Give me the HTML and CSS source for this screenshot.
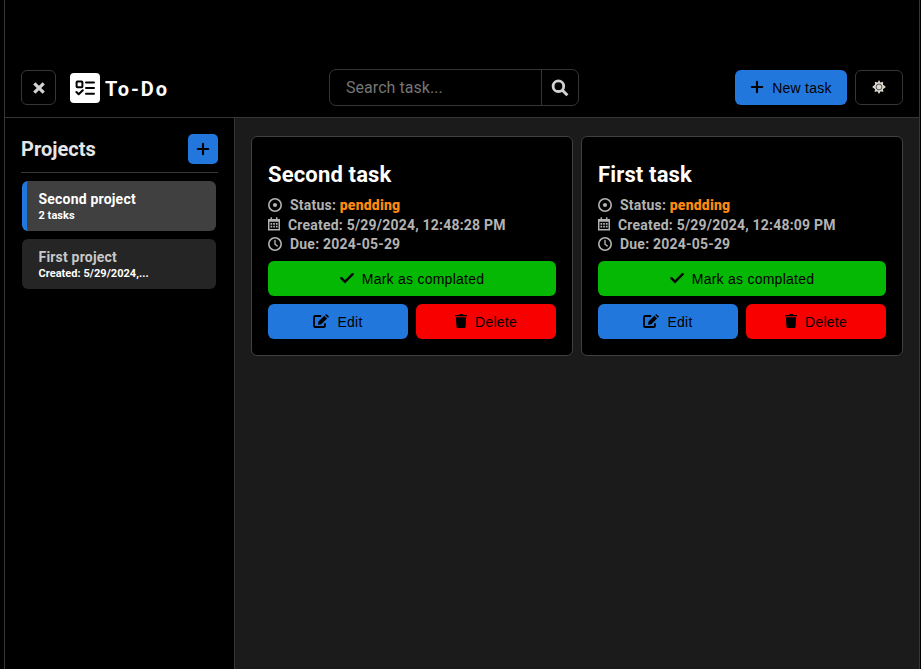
FILE: index.html
```html
<!DOCTYPE html>
<html lang="en">
<head>
<meta charset="utf-8">
<title>To-Do</title>
<link rel="stylesheet" href="styles.css">
</head>
<body>
<svg class="sprite" aria-hidden="true">
  <symbol id="plus" viewBox="0 0 14 14"><path d="M7 1.8v10.4M1.8 7h10.4" fill="none" stroke="currentColor" stroke-width="2.1" stroke-linecap="round"/></symbol>
  <symbol id="dot" viewBox="0 0 14 14"><circle cx="7" cy="7" r="6.2" fill="none" stroke="currentColor" stroke-width="1.6"/><circle cx="7" cy="7" r="2.1" fill="currentColor"/></symbol>
  <symbol id="calendar" viewBox="0 0 12 14"><path d="M.7 2.7h10.6v10.1H.7zM.7 4h10.6M3.3.3v3M8.7.3v3" fill="none" stroke="currentColor" stroke-width="1.5"/><path d="M2.5 6h1.7v1.7H2.5zM5.2 6h1.7v1.7H5.2zM7.9 6h1.7v1.7H7.9zM2.5 8.8h1.7v1.7H2.5zM5.2 8.8h1.7v1.7H5.2zM7.9 8.8h1.7v1.7H7.9z" fill="currentColor"/></symbol>
  <symbol id="clock" viewBox="0 0 14 14"><circle cx="7" cy="7" r="6.2" fill="none" stroke="currentColor" stroke-width="1.6"/><path d="M7 3.4V7.2L9.2 8.9" fill="none" stroke="currentColor" stroke-width="1.4" stroke-linecap="round"/></symbol>
  <symbol id="check" viewBox="0 0 14 14"><path d="M1.4 7.2 5 10.8l7.6-7.6" fill="none" stroke="currentColor" stroke-width="2.4" stroke-linecap="round"/></symbol>
  <symbol id="edit" viewBox="0 0 16 14"><path d="M8.2 2H2.3Q1 2 1 3.3v8.4Q1 13 2.3 13h8.4q1.3 0 1.3-1.3V9.3" fill="none" stroke="currentColor" stroke-width="1.8"/><path d="M11.3 1.8 14.1 4.6 8.2 10.3 5 10.8 5.5 7.6zM12.1 1l.7-.6q.5-.5 1 0l1.8 1.8q.5.5 0 1l-.7.6z" fill="currentColor"/></symbol>
  <symbol id="trash" viewBox="0 0 12 14"><path d="M.4.9h3.3L4.3 0h3.4l.6.9h3.3q.4 0 .4.4v1H0v-1q0-.4.4-.4zM.9 3.2h10.2l-.5 9.5Q10.5 14 9.3 14H2.7q-1.2 0-1.3-1.3z" fill="currentColor"/></symbol>
</svg>
<div class="app">
  <header class="header">
    <div class="brand">
      <button class="icon-btn close"><svg width="14" height="14" viewBox="0 0 14 14"><path d="M2.3 2.3l9.4 9.4M11.7 2.3l-9.4 9.4" fill="none" stroke="currentColor" stroke-width="3.2"/></svg></button>
      <svg class="logo" width="30" height="30" viewBox="0 0 30 30"><rect width="30" height="30" rx="4" fill="#fff"/><g fill="none" stroke="#000" stroke-width="2" stroke-linejoin="round" stroke-linecap="round"><rect x="6.6" y="8.4" width="5.8" height="5.8" rx=".8"/><path d="M6.4 19l2.3 2.3L12.8 17.2M16 9.4h8M16 15h8M16 20.8h8"/></g></svg>
      <span class="brand-name">To-Do</span>
    </div>
    <div class="search">
      <span class="search-input">Search task...</span>
      <button class="search-btn"><svg width="18" height="18" viewBox="0 0 18 18"><circle cx="7.4" cy="7.2" r="5.3" fill="none" stroke="currentColor" stroke-width="2.8"/><path d="M11.4 11.2l5 5" stroke="currentColor" stroke-width="3"/></svg></button>
    </div>
    <div class="actions">
      <button class="btn new"><svg width="14" height="14"><use href="#plus"/></svg><span>New task</span></button>
      <button class="icon-btn theme"><svg width="14" height="14" viewBox="0 0 14 14"><path d="M7 0l1.3 2.6 2.9-.9-.3 2.8L13.9 7l-3 2.2.5 2.7-2.8-.6L7 14l-1.6-2.7-2.8.6.5-2.7L.1 7l3-2.5-.3-2.8 2.9.9z" fill="currentColor"/><circle cx="7" cy="7" r="4.2" fill="currentColor"/><circle cx="7" cy="7" r="2.9" fill="none" stroke="#333" stroke-width=".8"/></svg></button>
    </div>
  </header>
  <div class="body">
    <aside class="sidebar">
      <div class="sidebar-head"><h2>Projects</h2><button class="add"><svg width="14" height="14"><use href="#plus"/></svg></button></div>
      <div class="project active"><div class="project-name">Second project</div><div class="project-meta">2 tasks</div></div>
      <div class="project"><div class="project-name">First project</div><div class="project-meta">Created: 5/29/2024,...</div></div>
    </aside>
    <main class="tasks">
      <article class="card">
        <h3>Second task</h3>
        <div class="info status"><svg width="14" height="14"><use href="#dot"/></svg><span>Status: <b>pendding</b></span></div>
        <div class="info created"><svg width="12" height="14"><use href="#calendar"/></svg><span>Created: 5/29/2024, 12:48:28 PM</span></div>
        <div class="info due"><svg width="14" height="14"><use href="#clock"/></svg><span>Due: 2024-05-29</span></div>
        <div class="buttons">
          <button class="btn done"><svg width="14" height="14"><use href="#check"/></svg><span>Mark as complated</span></button>
          <button class="btn edit"><svg width="16" height="14"><use href="#edit"/></svg><span>Edit</span></button>
          <button class="btn delete"><svg width="12" height="14"><use href="#trash"/></svg><span>Delete</span></button>
        </div>
      </article>
      <article class="card">
        <h3>First task</h3>
        <div class="info status"><svg width="14" height="14"><use href="#dot"/></svg><span>Status: <b>pendding</b></span></div>
        <div class="info created"><svg width="12" height="14"><use href="#calendar"/></svg><span>Created: 5/29/2024, 12:48:09 PM</span></div>
        <div class="info due"><svg width="14" height="14"><use href="#clock"/></svg><span>Due: 2024-05-29</span></div>
        <div class="buttons">
          <button class="btn done"><svg width="14" height="14"><use href="#check"/></svg><span>Mark as complated</span></button>
          <button class="btn edit"><svg width="16" height="14"><use href="#edit"/></svg><span>Edit</span></button>
          <button class="btn delete"><svg width="12" height="14"><use href="#trash"/></svg><span>Delete</span></button>
        </div>
      </article>
    </main>
  </div>
</div>
</body>
</html>
```
FILE: styles.css
```css
* { box-sizing: border-box; }
body { margin: 0; background: #000; font-family: Roboto, "Liberation Sans", sans-serif; color: #fff; overflow: hidden; }
h2, h3 { margin: 0; }
button { margin: 0; padding: 0; border: 0; font: inherit; display: flex; align-items: center; justify-content: center; }
svg { display: block; flex: none; }
.sprite { display: none; }

.app { height: 669px; margin: 0 1px 0 4px; border: solid #363636; border-width: 0 1px; display: flex; flex-direction: column; }
.header { height: 118px; padding: 58px 16px 0; border-bottom: 1px solid #363636; display: grid; grid-template-columns: 308px 250px 1fr; align-items: center; flex: none; }
.brand { display: flex; align-items: center; }
.icon-btn { height: 35px; border: 1px solid #363636; border-radius: 6px; background: #000; color: #d2d2d2; }
.close { width: 35px; }
.logo { margin-left: 14px; }
.brand-name { margin: 2px 0 0 5px; font-size: 20px; line-height: 24px; font-weight: 700; letter-spacing: 2px; }
.search { height: 37px; display: flex; border: 1px solid #363636; border-radius: 7px; }
.search-input { flex: 1; padding-left: 16px; font-size: 16px; line-height: 35px; color: #757575; letter-spacing: .05px; }
.search-btn { width: 37px; border-left: 1px solid #363636; background: transparent; color: #d2d2d2; }
.actions { display: flex; justify-content: flex-end; gap: 8px; }
.theme { width: 48px; color: #ddd8d0; }
.theme svg { margin-bottom: 1px; }

.btn { height: 35px; border-radius: 6px; gap: 8px; font-family: "Liberation Sans", Arial, sans-serif; font-size: 14px; color: #000; letter-spacing: .25px; }
.btn svg { margin-bottom: 2px; }
.new { width: 112px; background: #2277dd; }

.body { display: flex; flex: 1; }
.sidebar { width: 230px; padding: 16px 16px 0; border-right: 1px solid #363636; }
.sidebar-head { height: 39px; margin-bottom: 8px; border-bottom: 1px solid #363636; display: flex; justify-content: space-between; }
.sidebar-head h2 { font-size: 20px; line-height: 30px; color: #e6e6e6; }
.add { width: 30px; height: 30px; border-radius: 5px; background: #2277dd; color: #000; }
.add svg { margin-bottom: 1px; }
.project { width: 194px; height: 50px; margin: 0 0 8px 1px; padding: 9px 0 0 11.5px; border-left: 5px solid #252525; border-radius: 6px; background: #252525; }
.project.active { border-left-color: #2277dd; background: #404040; }
.project-name { font-size: 14px; line-height: 18px; font-weight: 700; color: #c8c8c8; letter-spacing: .2px; }
.active .project-name { color: #fff; }
.project-meta { font-size: 11px; line-height: 14px; padding-top: 1px; font-weight: 700; color: #fff; letter-spacing: .04px; }

.tasks { flex: 1; padding: 18px 16px 0; display: grid; grid-template-columns: 322px 322px; gap: 8px; align-items: start; background: #1b1b1b; }
.card { height: 220px; padding: 24px 16px 0; border: 1px solid #404040; border-radius: 6px; background: #000; }
.card h3 { margin-bottom: 6px; font-size: 22px; line-height: 28px; letter-spacing: .15px; }
.info { height: 20px; display: flex; align-items: center; gap: 8px; font-size: 14px; font-weight: 700; line-height: 20px; color: #b3b3b3; letter-spacing: .21px; }
.created, .due { height: 19.5px; }
.created svg { margin-bottom: 2px; }
.info b { color: #ff8811; }
.buttons { margin-top: 7px; display: grid; grid-template-columns: 1fr 1fr; gap: 8px; }
.done { grid-column: span 2; background: #04b804; }
.edit { background: #2277dd; }
.delete { background: #f80000; color: #000; }
```
